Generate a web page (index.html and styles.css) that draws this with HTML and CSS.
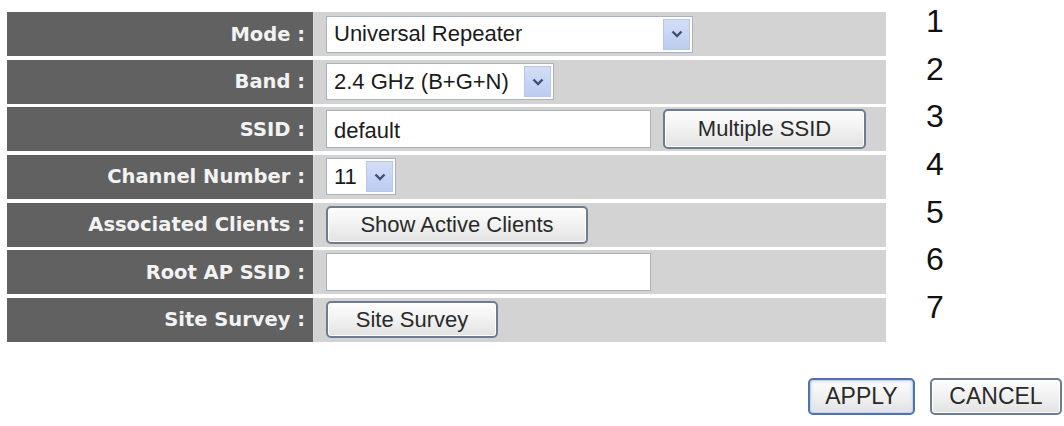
FILE: index.html
```html
<!DOCTYPE html>
<html>
<head>
<meta charset="utf-8">
<link rel="stylesheet" href="styles.css">
</head>
<body>
<div class="page">
  <div class="main">
    <div class="form">
      <div class="row">
        <div class="label">Mode :</div>
        <div class="field">
          <div class="select w-mode"><span class="val">Universal Repeater</span><span class="arrow"><svg width="12" height="8" viewBox="0 0 12 8"><path d="M1.5 1.5 L6 6 L10.5 1.5" fill="none" stroke="#3f4f78" stroke-width="2.4"/></svg></span></div>
        </div>
      </div>
      <div class="row">
        <div class="label">Band :</div>
        <div class="field">
          <div class="select w-band"><span class="val">2.4 GHz (B+G+N)</span><span class="arrow"><svg width="12" height="8" viewBox="0 0 12 8"><path d="M1.5 1.5 L6 6 L10.5 1.5" fill="none" stroke="#3f4f78" stroke-width="2.4"/></svg></span></div>
        </div>
      </div>
      <div class="row">
        <div class="label">SSID :</div>
        <div class="field">
          <input class="text" type="text" value="default">
          <button class="btn w-multi">Multiple SSID</button>
        </div>
      </div>
      <div class="row">
        <div class="label">Channel Number :</div>
        <div class="field">
          <div class="select w-chan"><span class="val">11</span><span class="arrow"><svg width="12" height="8" viewBox="0 0 12 8"><path d="M1.5 1.5 L6 6 L10.5 1.5" fill="none" stroke="#3f4f78" stroke-width="2.4"/></svg></span></div>
        </div>
      </div>
      <div class="row">
        <div class="label">Associated Clients :</div>
        <div class="field">
          <button class="btn w-show">Show Active Clients</button>
        </div>
      </div>
      <div class="row">
        <div class="label">Root AP SSID :</div>
        <div class="field">
          <input class="text" type="text" value="">
        </div>
      </div>
      <div class="row">
        <div class="label">Site Survey :</div>
        <div class="field">
          <button class="btn w-site">Site Survey</button>
        </div>
      </div>
    </div>
    <div class="nums">
      <div>1</div><div>2</div><div>3</div><div>4</div><div>5</div><div>6</div><div>7</div>
    </div>
  </div>
  <div class="actions">
    <button class="btn act apply">APPLY</button>
    <button class="btn act cancel">CANCEL</button>
  </div>
</div>
</body>
</html>
```

FILE: styles.css
```css
html, body {
  margin: 0;
  padding: 0;
  background: #ffffff;
}
.page {
  width: 1064px;
  height: 426px;
  position: relative;
}
.main {
  display: flex;
  align-items: flex-start;
}
.form {
  margin-top: 12px;
  margin-left: 7px;
  display: flex;
  flex-direction: column;
  gap: 3.67px;
}
.row {
  display: flex;
  height: 44px;
}
.label {
  width: 298px;
  padding-right: 8px;
  background: #616161;
  color: #f3f3f3;
  font-family: "DejaVu Sans", Verdana, sans-serif;
  font-weight: bold;
  font-size: 19.5px;
  display: flex;
  align-items: center;
  justify-content: flex-end;
  white-space: nowrap;
}
.field {
  width: 560px;
  padding-left: 12px;
  background: #d3d3d3;
  display: flex;
  align-items: center;
  gap: 12px;
  border-left: 1px solid #dcdcdc;
  margin-left: 0;
}
.select {
  box-sizing: border-box;
  height: 37px;
  background: #ffffff;
  border: 1px solid #a9b2bf;
  display: flex;
  align-items: center;
  justify-content: space-between;
  padding: 2px 2px 2px 7px;
  font-family: "Liberation Sans", Arial, sans-serif;
  font-size: 22px;
  color: #1b1b1b;
}
.select .val {
  white-space: nowrap;
}
.select .arrow {
  box-sizing: border-box;
  width: 27px;
  height: 100%;
  background: linear-gradient(#d3ddf6, #bccdf1);
  border: 1px solid #b7c7ea;
  display: flex;
  align-items: center;
  justify-content: center;
}
.w-mode { width: 367px; }
.w-band { width: 228px; }
.w-chan { width: 70px; }
.text {
  box-sizing: border-box;
  width: 325px;
  height: 38px;
  margin: 0;
  border: 1px solid #a9b0ba;
  background: #ffffff;
  padding: 4px 7px 0 7px;
  font-family: "Liberation Sans", Arial, sans-serif;
  font-size: 22px;
  color: #1b1b1b;
  outline: none;
}
.btn {
  box-sizing: border-box;
  height: 38px;
  margin: 0;
  padding: 0;
  border: 2px solid #6d7c8e;
  border-radius: 5px;
  background: linear-gradient(#fdfdfd 0%, #f1f1f1 50%, #e2e2e2 100%);
  font-family: "Liberation Sans", Arial, sans-serif;
  font-size: 22px;
  color: #2a2a2a;
  box-shadow: inset 0 0 0 1px #ffffff;
}
.w-multi { width: 203px; height: 40px; }
.w-show { width: 262px; }
.w-site { width: 172px; height: 37px; }
.nums {
  margin-left: 40px;
  margin-top: -2px;
  font-family: "Liberation Sans", Arial, sans-serif;
  font-size: 32px;
  line-height: 47.67px;
  color: #111111;
}
.actions {
  display: flex;
  justify-content: flex-end;
  gap: 15px;
  margin-top: 36px;
  margin-right: 2px;
}
.act {
  height: 37px;
  font-size: 23px;
}
.apply {
  width: 107px;
  border-color: #5472a6;
  box-shadow: inset 0 0 0 1px #c3d3f0, inset 0 0 3px 2px #dbe5f7;
}
.cancel {
  width: 132px;
}
```
